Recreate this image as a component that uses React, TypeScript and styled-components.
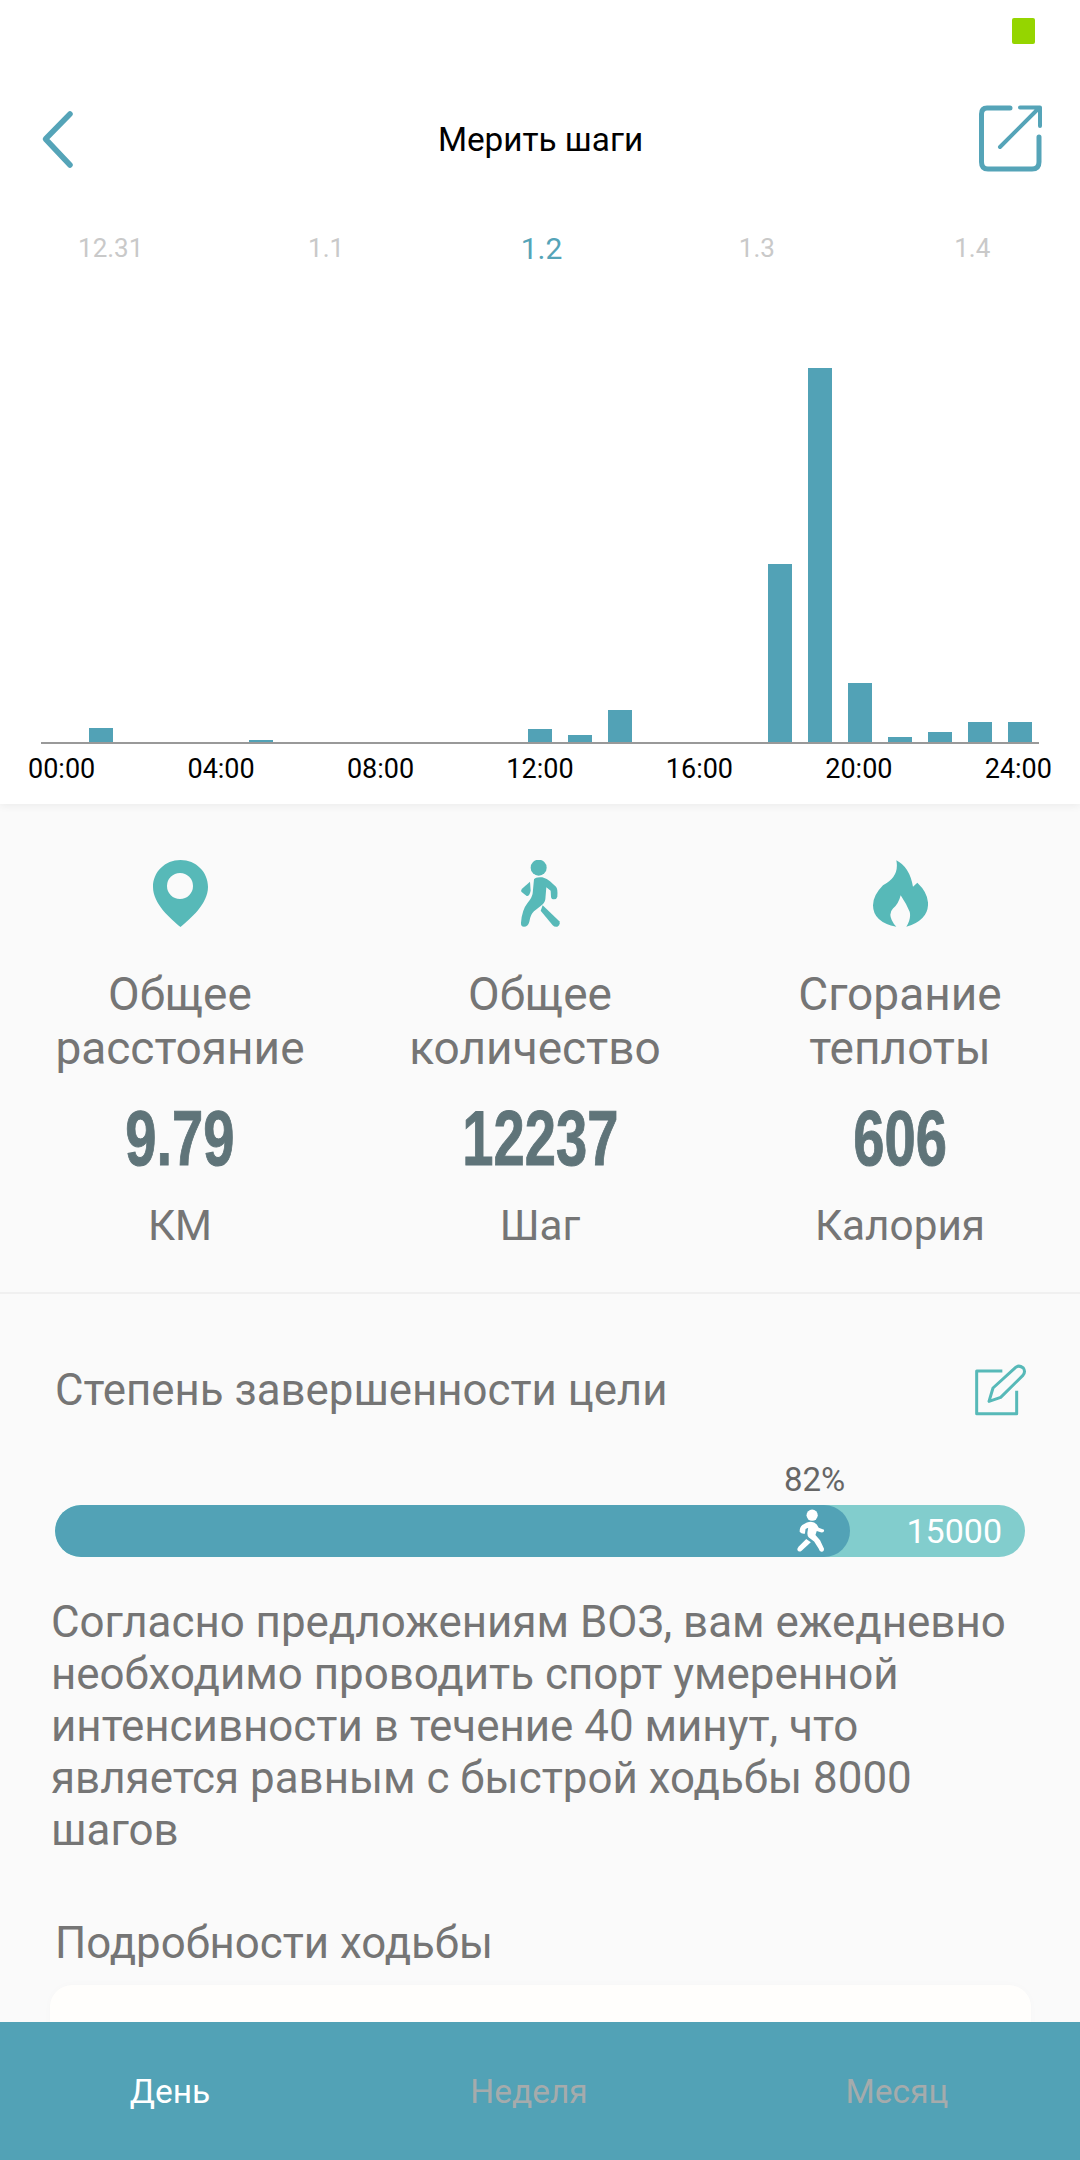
import React from "react";
import styled, { createGlobalStyle } from "styled-components";

const Global = createGlobalStyle`
  html, body { margin: 0; padding: 0; background: #fafafa; }
  * { box-sizing: border-box; }
`;

const Page = styled.div`
  width: 1080px;
  height: 2160px;
  display: flex;
  flex-direction: column;
  overflow: hidden;
  background: #fafafa;
  font-family: Roboto, "Liberation Sans", sans-serif;
`;
const Content = styled.div`
  flex: 1;
  min-height: 0;
  overflow: hidden;
`;
const TopPanel = styled.section`
  height: 804px;
  background: #fff;
  box-shadow: 0 2px 8px rgba(0, 0, 0, 0.06);
  position: relative;
`;
const StatusBar = styled.div`
  height: 64px;
  display: flex;
  justify-content: flex-end;
  padding: 18px 45px 0 0;
`;
const Battery = styled.div`
  width: 23px;
  height: 26px;
  background: #95d500;
  border-radius: 2px;
`;
const NavBar = styled.header`
  height: 152px;
  display: grid;
  grid-template-columns: 1fr auto 1fr;
  align-items: center;
  padding: 0 37px 0 41px;
`;
const Title = styled.h1`
  margin: 0 3px 2px 0;
  font-size: 33.3px;
  font-weight: 400;
  color: #000;
`;
const NavEnd = styled.div`
  justify-self: end;
  display: flex;
  margin-bottom: 4px;
`;
const NavStart = styled.div`
  display: flex;
  margin-bottom: 2px;
`;
const DateRow = styled.div`
  height: 64px;
  display: grid;
  grid-template-columns: repeat(5, 1fr);
  align-items: center;
  padding-left: 3px;
`;
const DateItem = styled.div<{ $active?: boolean }>`
  text-align: center;
  font-size: ${(p) => (p.$active ? "30px" : "26px")};
  color: ${(p) => (p.$active ? "#55a4b8" : "#c9c9c9")};
`;
const Chart = styled.div`
  height: 464px;
  margin-left: 41px;
  width: 998px;
  display: flex;
  align-items: flex-end;
  border-bottom: 2px solid #999;
`;
const Slot = styled.div`
  width: 39.95px;
  flex: none;
  padding-left: 8px;
  display: flex;
  align-items: flex-end;
`;
const Bar = styled.div`
  width: 24px;
  background: #52a2b6;
`;
const TimeRow = styled.div`
  height: 50px;
  display: flex;
  justify-content: space-between;
  align-items: center;
  padding: 0 28px;
  font-size: 27px;
  color: #000;
`;
const Stats = styled.section`
  height: 490px;
  padding-top: 56px;
  display: grid;
  grid-template-columns: repeat(3, 1fr);
  border-bottom: 2px solid #f0f0f0;
`;
const Stat = styled.div`
  display: flex;
  flex-direction: column;
  align-items: center;
  text-align: center;
`;
const IconBox = styled.div`
  height: 67px;
  display: flex;
`;
const StatLabel = styled.div`
  margin-top: 40px;
  font-size: 46px;
  line-height: 54px;
  color: #757575;
`;
const StatLine = styled.span<{ $inset?: number }>`
  display: block;
  margin-right: ${(p) => p.$inset ?? 0}px;
`;
const StatValue = styled.div`
  margin-top: 21px;
  height: 84px;
  line-height: 84px;
  font-family: "Liberation Sans Narrow", "Liberation Sans", sans-serif;
  font-weight: 700;
  font-size: 78px;
  -webkit-text-stroke: 1px #5f7479;
  color: #5f7479;
  transform: scaleX(0.72);
`;
const StatUnit = styled.div`
  margin-top: 22px;
  font-size: 42.3px;
  line-height: 48px;
  color: #757575;
`;
const Goal = styled.section`
  padding: 70px 55px 0;
`;
const GoalHead = styled.div`
  display: flex;
  justify-content: space-between;
  align-items: center;
  height: 52px;
  margin-right: -2px;
`;
const SectionTitle = styled.h2`
  margin: 0;
  font-size: 43.8px;
  line-height: 52px;
  font-weight: 400;
  color: #757575;
`;
const Percent = styled.div`
  margin-top: 44px;
  height: 40px;
  line-height: 40px;
  padding-left: 729px;
  font-size: 33px;
  color: #666;
`;
const Track = styled.div`
  position: relative;
  height: 52px;
  margin-top: 5px;
  background: #82cdcd;
  border-radius: 27px;
  overflow: hidden;
  display: flex;
  justify-content: flex-end;
  align-items: center;
  padding-right: 23px;
  font-size: 34px;
  color: #fff;
`;
const TrackValue = styled.span`
  position: relative;
`;
const Fill = styled.div`
  position: absolute;
  left: 0;
  top: 0;
  bottom: 0;
  background: #52a2b6;
  border-radius: 27px;
  display: flex;
  justify-content: flex-end;
  align-items: center;
  padding-right: 25px;
`;
const Paragraph = styled.p`
  margin: 39px 0 0 -4px;
  width: 980px;
  font-size: 43.9px;
  line-height: 52px;
  color: #757575;
`;
const Details = styled(SectionTitle)`
  margin: 61px 0 0 0;
`;
const Card = styled.div`
  margin: 16px -6px 0 -5px;
  height: 200px;
  background: #fffefc;
  border-radius: 22px;
  box-shadow: 0 0 8px rgba(0, 0, 0, 0.02);
`;
const TabBar = styled.nav`
  flex: none;
  height: 138px;
  background: #52a2b6;
  display: grid;
  grid-template-columns: 340px 378px 358px;
  align-items: center;
`;
const Tab = styled.div<{ $active?: boolean }>`
  text-align: center;
  font-size: 33.5px;
  color: ${(p) => (p.$active ? "#fff" : "#a5abac")};
`;

const TEAL = "#57b9b8";
const BLUE = "#55a4b8";

const Back = () => (
  <svg width="36" height="60" viewBox="41 108 36 60" fill="none" stroke={BLUE} strokeWidth="5.5" strokeLinecap="round" strokeLinejoin="round">
    <path d="M70 113 L45.5 138 L70 164" />
  </svg>
);
const Share = () => (
  <svg width="66" height="68" viewBox="979 104 66 68" fill="none" stroke={BLUE} strokeWidth="5" strokeLinecap="round" strokeLinejoin="round">
    <path d="M1012 108 H989 Q983.500 108 983.500 114 V162 Q983.500 169 990 169 H1034 Q1041 169 1041 162 V137" />
    <path d="M1002 147 L1041 108 M1022 107.500 H1042 V126" strokeWidth="4" />
  </svg>
);
const Pin = () => (
  <svg width="55" height="67" viewBox="0 0 55 67">
    <path fill={TEAL} fillRule="evenodd" d="M27.500 0 C12 0 0 12 0 27 C0 44 18 59 27.500 67 C37 59 55 44 55 27 C55 12 43 0 27.500 0 Z M27 13 A13 13 0 1 0 27 39 A13 13 0 1 0 27 13 Z" />
  </svg>
);
const Walker = () => (
  <svg width="41" height="67" viewBox="118 60 123 201" fill={TEAL}>
    <circle cx="174" cy="83" r="24" />
    <path d="M160 118 Q165 110 185 112 Q200 116 208 124 L226 140 Q232 146 230 170 Q228 178 220 178 Q212 178 211 170 L210 152 L197 142 L194 178 Q192 190 180 198 L160 214 Q150 222 146 245 Q142 260 130 260 Q120 260 121 248 Q124 210 140 190 Q155 172 156 160 Z" />
    <path d="M148 125 L150 152 Q146 170 138 168 L122 155 Q120 150 124 146 Z" />
    <path d="M186 196 L236 244 Q240 254 230 260 Q222 262 216 256 L180 212 Z" />
  </svg>
);
const Flame = () => (
  <svg width="55" height="67" viewBox="95 60 165 200" fill={TEAL}>
    <path d="M165 60 Q205 80 215 140 L228 128 Q262 160 260 195 Q258 240 195 260 Q210 235 205 215 Q195 190 178 165 Q172 190 155 205 Q135 225 165 260 Q95 245 95 195 Q95 165 125 135 Q175 110 165 60 Z" />
  </svg>
);
const Edit = () => (
  <svg width="53" height="52" viewBox="820 60 159 156" fill="none" stroke={TEAL} strokeWidth="9" strokeLinejoin="round">
    <path d="M905 81 H828 V209 H948 V140" />
    <path d="M865 172 L877 132 L945 70 Q955 62 968 72 Q976 84 966 95 L900 160 Z" />
  </svg>
);
const BarWalker = () => (
  <svg width="28" height="44" viewBox="290 506 85 132" fill="#fff">
    <circle cx="336" cy="524" r="17" />
    <path d="M320 546 Q340 540 350 552 L356 562 L372 568 Q374 578 362 576 L350 572 L346 584 L360 600 L372 626 Q372 636 364 635 Q358 634 356 626 L342 604 L326 592 Q320 586 322 574 L324 562 L316 566 L314 580 Q304 582 298 574 Q298 560 306 554 Z" />
    <path d="M318 596 L332 606 L304 632 Q296 638 291 630 Q290 624 296 618 Z" />
  </svg>
);

const heights: Record<number, number> = {
  1: 14, 5: 2, 12: 13, 13: 7, 14: 32, 18: 178, 19: 374, 20: 59, 21: 5, 22: 10, 23: 20, 24: 20,
};
const slots = Array.from({ length: 25 }, (_, i) => heights[i] ?? 0);
const dates = ["12.31", "1.1", "1.2", "1.3", "1.4"];
const times = ["00:00", "04:00", "08:00", "12:00", "16:00", "20:00", "24:00"];

export default function App() {
  return (
    <Page>
      <Global />
      <Content>
        <TopPanel>
          <StatusBar><Battery /></StatusBar>
          <NavBar>
            <NavStart><Back /></NavStart>
            <Title>Мерить шаги</Title>
            <NavEnd><Share /></NavEnd>
          </NavBar>
          <DateRow>
            {dates.map((d) => (
              <DateItem key={d} $active={d === "1.2"}>{d}</DateItem>
            ))}
          </DateRow>
          <Chart>
            {slots.map((h, i) => (
              <Slot key={i}>
                <Bar style={{ height: h }} />
              </Slot>
            ))}
          </Chart>
          <TimeRow>
            {times.map((t) => (
              <span key={t}>{t}</span>
            ))}
          </TimeRow>
        </TopPanel>
        <Stats>
          <Stat>
            <IconBox><Pin /></IconBox>
            <StatLabel>
              <StatLine>Общее</StatLine>
              <StatLine>расстояние</StatLine>
            </StatLabel>
            <StatValue>9.79</StatValue>
            <StatUnit>КМ</StatUnit>
          </Stat>
          <Stat>
            <IconBox><Walker /></IconBox>
            <StatLabel>
              <StatLine>Общее</StatLine>
              <StatLine $inset={10}>количество</StatLine>
            </StatLabel>
            <StatValue>12237</StatValue>
            <StatUnit>Шаг</StatUnit>
          </Stat>
          <Stat>
            <IconBox><Flame /></IconBox>
            <StatLabel>
              <StatLine>Сгорание</StatLine>
              <StatLine>теплоты</StatLine>
            </StatLabel>
            <StatValue>606</StatValue>
            <StatUnit>Калория</StatUnit>
          </Stat>
        </Stats>
        <Goal>
          <GoalHead>
            <SectionTitle>Степень завершенности цели</SectionTitle>
            <Edit />
          </GoalHead>
          <Percent>82%</Percent>
          <Track>
            <Fill style={{ width: `${(795 / 970) * 100}%` }}><BarWalker /></Fill>
            <TrackValue>15000</TrackValue>
          </Track>
          <Paragraph>
            Согласно предложениям ВОЗ, вам ежедневно необходимо проводить спорт умеренной интенсивности в течение 40 минут, что является равным с быстрой ходьбы 8000 шагов
          </Paragraph>
          <Details>Подробности ходьбы</Details>
          <Card />
        </Goal>
      </Content>
      <TabBar>
        <Tab $active>День</Tab>
        <Tab>Неделя</Tab>
        <Tab>Месяц</Tab>
      </TabBar>
    </Page>
  );
}
